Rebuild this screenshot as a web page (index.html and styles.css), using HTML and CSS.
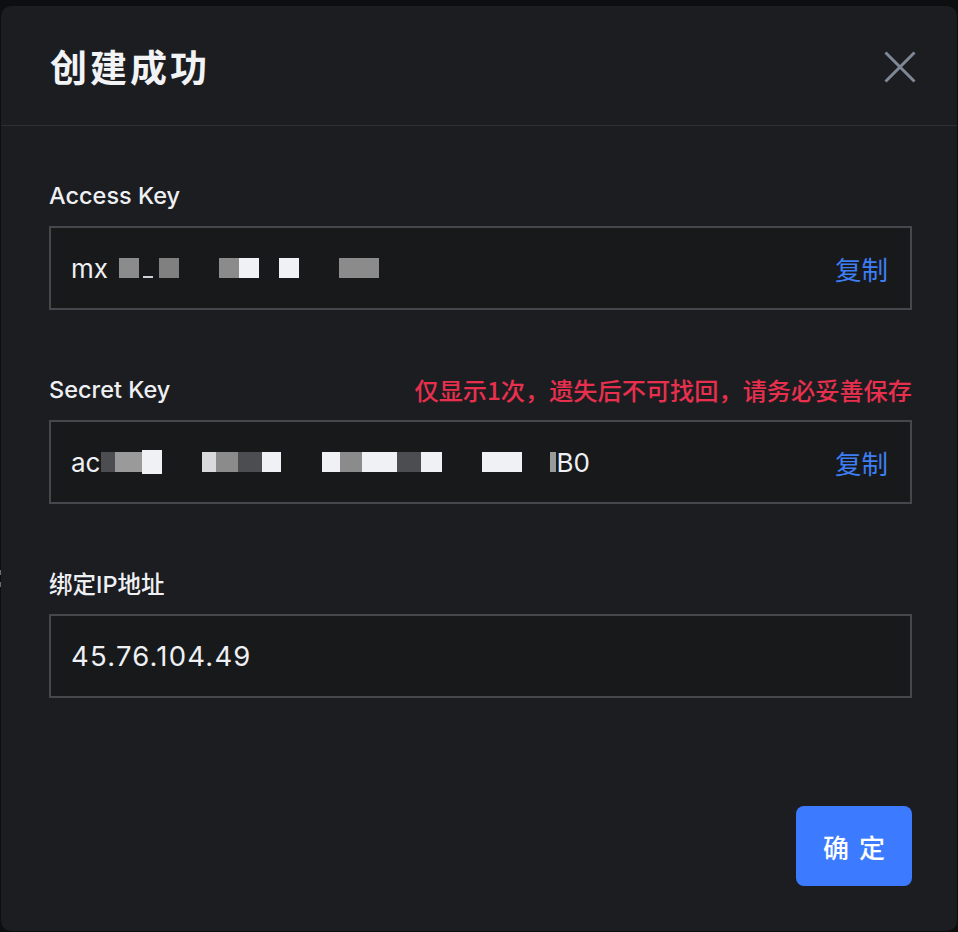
FILE: index.html
```html
<!DOCTYPE html>
<html lang="zh-CN">
<head>
<meta charset="utf-8">
<title>创建成功</title>
<link rel="stylesheet" href="styles.css">
</head>
<body>
<div class="backdrop-marks"><span></span><span></span></div>
<div class="modal">
  <div class="modal-header">
    <h1 class="modal-title">创建成功</h1>
    <button class="close-btn" aria-label="关闭">
      <svg width="32" height="32" viewBox="0 0 32 32"><path d="M1.5 1.5 L30.5 30.5 M30.5 1.5 L1.5 30.5" stroke="#7f8896" stroke-width="3" fill="none"/></svg>
    </button>
  </div>
  <div class="modal-body">
    <div class="field">
      <div class="field-head"><span class="label">Access Key</span></div>
      <div class="input">
        <span class="value">mx<span class="mask">
          <i class="b g1 w20"></i><i class="u"></i><i class="b g2 w20"></i><i class="sp40"></i><i class="b g1 w20"></i><i class="b wh w20"></i><i class="sp20"></i><i class="b wh w20"></i><i class="sp40"></i><i class="b g1 w40"></i>
        </span></span>
        <span class="copy">复制</span>
      </div>
    </div>
    <div class="field">
      <div class="field-head"><span class="label">Secret Key</span><span class="warn">仅显示1次，遗失后不可找回，请务必妥善保存</span></div>
      <div class="input">
        <span class="value">ac<span class="mask mask2"><i class="b dk w14"></i><i class="b g3 w27"></i><i class="b wh w20 tall"></i><i class="sp40"></i><i class="b lt w14"></i><i class="b g1 w22"></i><i class="b dk w24"></i><i class="b wh w19"></i><i class="sp41"></i><i class="b wh w18"></i><i class="b g1 w22"></i><i class="b wh w35"></i><i class="b dk w24"></i><i class="b wh w21"></i><i class="sp40"></i><i class="b wh w40"></i><i class="sp28"></i><i class="b g3 w6"></i></span>B0</span>
        <span class="copy">复制</span>
      </div>
    </div>
    <div class="field">
      <div class="field-head"><span class="label">绑定IP地址</span></div>
      <div class="input"><span class="value ip">45.76.104.49</span></div>
    </div>
  </div>
  <div class="modal-footer">
    <button class="ok-btn">确 定</button>
  </div>
</div>
</body>
</html>
```

FILE: styles.css
```css
html, body {
  margin: 0;
  padding: 0;
  background: #0d0e10;
}
body {
  width: 958px;
  height: 932px;
  overflow: hidden;
  font-family: Inter, "Noto Sans CJK SC", sans-serif;
  position: relative;
}
.backdrop-marks span {
  position: absolute;
  left: 0;
  width: 1px;
  height: 5px;
  background: #6b6e74;
}
.backdrop-marks span:first-child { top: 570px; }
.backdrop-marks span:last-child { top: 582px; }
.modal {
  margin: 6px 1px 0 1px;
  height: 925px;
  background: #1c1d21;
  border-radius: 10px;
  display: flex;
  flex-direction: column;
  position: relative;
}
.modal-header {
  height: 120px;
  border-bottom: 1px solid #2d2f34;
  display: flex;
  align-items: center;
  justify-content: space-between;
  padding: 0 41px 0 49px;
  box-sizing: border-box;
}
.modal-title {
  margin: 0;
  font-family: "Noto Sans CJK SC", sans-serif;
  font-size: 37px;
  font-weight: 700;
  color: #f2f3f5;
  letter-spacing: 3px;
}
.close-btn {
  background: none;
  border: 0;
  padding: 0;
  width: 32px;
  height: 32px;
  display: flex;
  cursor: pointer;
  margin-top: 2px;
}
.modal-body {
  padding: 53px 45px 0 48px;
  display: flex;
  flex-direction: column;
  gap: 63px;
}
.field-head {
  height: 32px;
  display: flex;
  align-items: center;
  justify-content: space-between;
  margin-bottom: 15px;
}
.label {
  font-size: 23.5px;
  font-weight: 500;
  color: #eef0f3;
}
.warn {
  font-family: "Noto Sans CJK SC", sans-serif;
  font-size: 24.2px;
  font-weight: 500;
  color: #e8304e;
}
.input {
  height: 84px;
  box-sizing: border-box;
  border: 2px solid #45474c;
  background: #18191b;
  display: flex;
  align-items: center;
  justify-content: space-between;
  padding: 0 22px 0 20px;
}
.value {
  font-size: 26px;
  color: #eef0f3;
  display: flex;
  align-items: center;
}
.value.ip {
  font-size: 27.5px;
  letter-spacing: 1.2px;
}
.mask {
  display: inline-flex;
  align-items: center;
  margin-left: 11px;
  height: 20px;
}
.mask2 {
  margin-left: 1px;
}
.mask i { display: inline-block; height: 20px; }
.b.g1 { background: #8b8b8c; }
.b.g2 { background: #7f807f; }
.b.g3 { background: #9a9a9b; }
.b.dk { background: #4c4d50; }
.b.lt { background: #d9d9dc; }
.b.wh { background: #f0f1f5; }
.b.tall { height: 24px; }
.mask i.u { width: 10px; height: 2px; background: #cfd0d3; margin: 18px 6px 0 4px; }
.w6 { width: 6px; } .w14 { width: 14px; } .w18 { width: 18px; } .w19 { width: 19px; }
.w20 { width: 20px; } .w21 { width: 21px; } .w22 { width: 22px; } .w24 { width: 24px; }
.w27 { width: 27px; } .w35 { width: 35px; } .w40 { width: 40px; }
.sp20 { width: 20px; } .sp28 { width: 28px; } .sp40 { width: 40px; } .sp41 { width: 41px; }
.copy {
  font-family: "Noto Sans CJK SC", sans-serif;
  font-size: 26.5px;
  color: #3d7ef4;
  cursor: pointer;
}
.modal-footer {
  margin-top: auto;
  display: flex;
  justify-content: flex-end;
  padding: 0 45px 45px 0;
}
.ok-btn {
  width: 116px;
  height: 80px;
  border: 0;
  border-radius: 8px;
  background: #3c7bff;
  color: #ffffff;
  font-family: "Noto Sans CJK SC", sans-serif;
  font-size: 26px;
  font-weight: 500;
  letter-spacing: 2px;
  padding: 0 0 0 2px;
}
```
